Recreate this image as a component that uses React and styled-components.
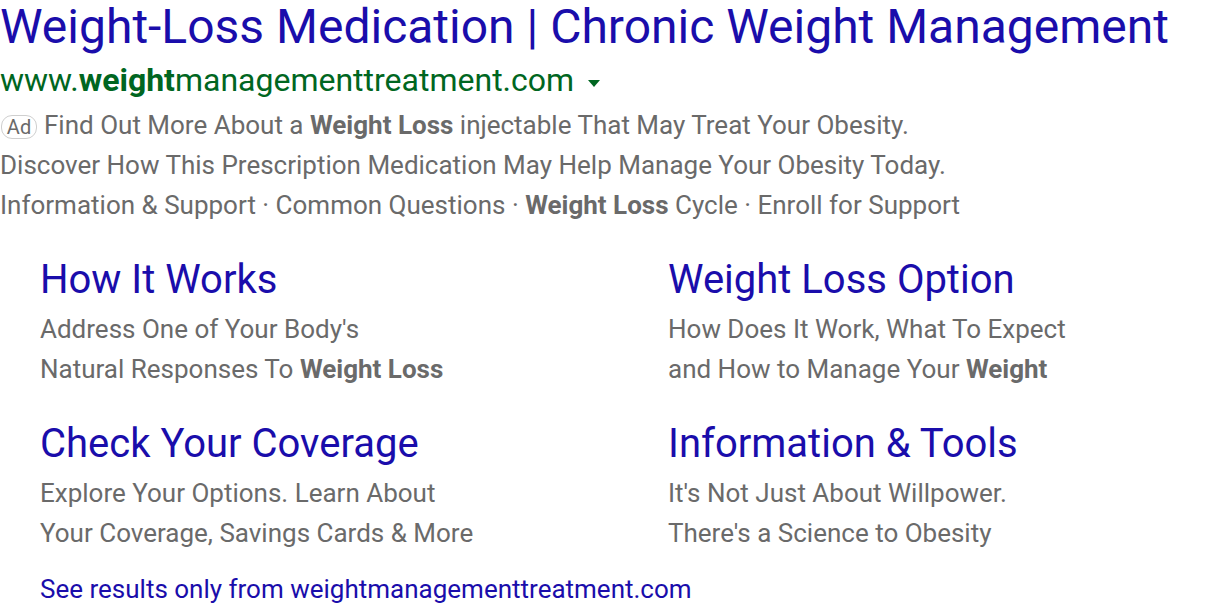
import styled, { createGlobalStyle } from 'styled-components'

const Global = createGlobalStyle`
  body {
    margin: 0;
    background: #fff;
    font-family: Roboto, "Liberation Sans", Arial, sans-serif;
  }
`

const sitelinks = [
    { title: 'How It Works', lines: ["Address One of Your Body's", <>Natural Responses To <b>Weight Loss</b></>] },
    { title: 'Weight Loss Option', lines: ['How Does It Work, What To Expect', <>and How to Manage Your <b>Weight</b></>] },
    { title: 'Check Your Coverage', lines: ['Explore Your Options. Learn About', 'Your Coverage, Savings Cards & More'] },
    { title: 'Information & Tools', lines: ["It's Not Just About Willpower.", "There's a Science to Obesity"] },
]

function App() {
    return (
        <Page>
            <Global />
            <Title>Weight-Loss Medication | Chronic Weight Management</Title>
            <UrlRow>
                <span>www.<b>weight</b>managementtreatment.com</span>
                <Caret />
            </UrlRow>
            <Desc>
                <AdBadge>Ad</AdBadge>Find Out More About a <b>Weight Loss</b> injectable That May Treat Your Obesity.
            </Desc>
            <Desc>Discover How This Prescription Medication May Help Manage Your Obesity Today.</Desc>
            <Desc>
                Information &amp; Support · Common Questions · <b>Weight Loss</b> Cycle · Enroll for Support
            </Desc>
            <Grid>
                {sitelinks.map((s, i) => (
                    <Sitelink key={i}>
                        <SitelinkTitle>{s.title}</SitelinkTitle>
                        {s.lines.map((l, j) => <SitelinkDesc key={j}>{l}</SitelinkDesc>)}
                    </Sitelink>
                ))}
            </Grid>
            <Footer>See results only from weightmanagementtreatment.com</Footer>
        </Page>
    )
}

const Page = styled.div`
    padding: 0;
`;

const Title = styled.div`
    color: #1a0dab;
    font-size: 48px;
    line-height: 54px;
    white-space: nowrap;
`;

const UrlRow = styled.div`
    display: flex;
    align-items: center;
    gap: 14px;
    color: #006621;
    font-size: 32px;
    line-height: 40px;
    margin: 6px 0 5px;
    b { font-weight: 700; }
`;

const Caret = styled.span`
    width: 0;
    height: 0;
    border-left: 6px solid transparent;
    border-right: 6px solid transparent;
    border-top: 7px solid #006621;
    margin-top: 6px;
`;

const Desc = styled.div`
    color: #6a6a6a;
    font-size: 26px;
    line-height: 40px;
    white-space: nowrap;
    b { font-weight: 700; }
`;

const AdBadge = styled.span`
    display: inline-block;
    box-sizing: border-box;
    width: 36px;
    height: 24px;
    margin: 0 7px 0 1px;
    font-size: 20px;
    line-height: 22px;
    text-align: center;
    border: 1px solid #cfcfcf;
    border-radius: 11px;
    color: #6a6a6a;
    vertical-align: 0;
`;

const Grid = styled.div`
    display: grid;
    grid-template-columns: 628px 1fr;
    row-gap: 31px;
    padding: 31px 0 0 40px;
`;

const Sitelink = styled.div`
    display: flex;
    flex-direction: column;
`;

const SitelinkTitle = styled.div`
    color: #1a0dab;
    font-size: 40px;
    line-height: 48px;
    margin-bottom: 5px;
`;

const SitelinkDesc = styled.div`
    color: #6a6a6a;
    font-size: 26px;
    line-height: 40px;
    white-space: nowrap;
    b { font-weight: 700; }
`;

const Footer = styled.div`
    color: #1a0dab;
    font-size: 26px;
    line-height: 40px;
    padding: 16px 0 0 40px;
`;

export default App
